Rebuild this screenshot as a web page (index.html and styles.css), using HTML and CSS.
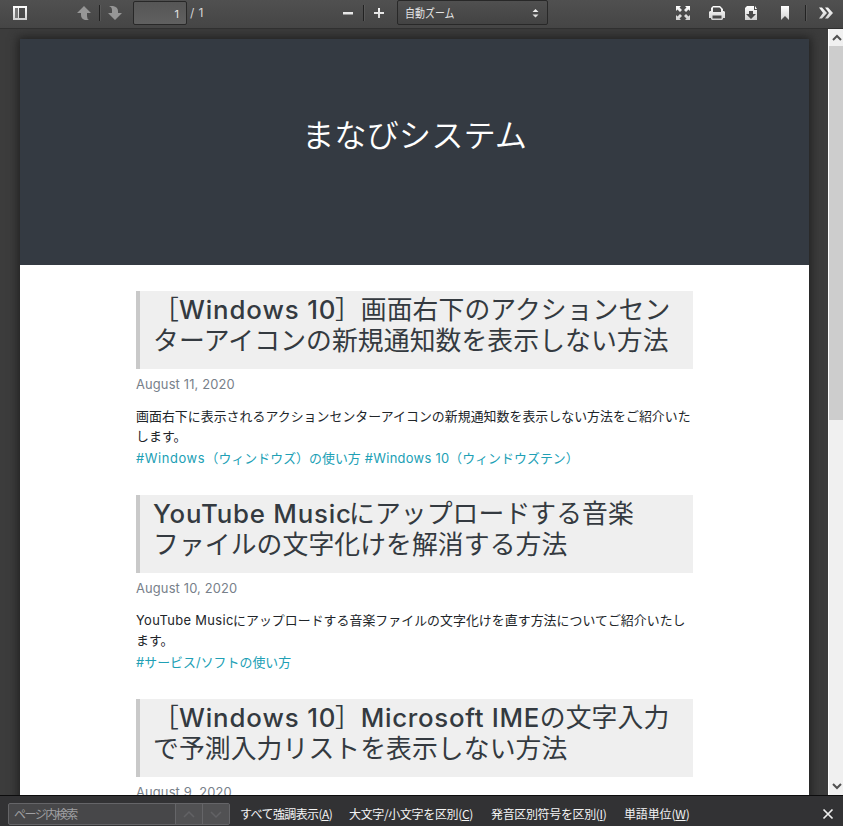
FILE: index.html
```html
<!DOCTYPE html>
<html lang="ja">
<head>
<meta charset="utf-8">
<title>まなびシステム</title>
<link rel="stylesheet" href="styles.css">
</head>
<body>
<div class="viewer">
  <header class="toolbar">
    <svg class="icons" width="843" height="29" viewBox="0 0 843 29">
      <defs>
        <linearGradient id="metal" x1="0" y1="6" x2="0" y2="21" gradientUnits="userSpaceOnUse"><stop offset="0" stop-color="#fff"/><stop offset="1" stop-color="#ccc"/></linearGradient>
      </defs>
      <g fill="url(#metal)">
        <path fill-rule="evenodd" d="M13 6h14v14H13zM15 8v10h3V8zM19 8v10h6V8z"/>
        <path fill="#777" d="M15 8h3v10h-3z"/>
        <path fill="#969696" d="M84 6l7 7h-4v3q0 3 2 4h-4q-4-1-4-5v-2h-4z"/>
        <path fill="#969696" d="M109 6h4q5 1 5 5v2h4l-7 7-7-7h4v-3q0-3-3-4z"/>
        <path d="M343 12h10v2.500h-10zM374 12h4V8h2v4h4v2h-4v4h-2v-4h-4z"/>
        <path d="M532.500 12l3-3 3 3zM532.500 14.500h6l-3 3z"/>
        <path d="M676 6h5l-1.500 1.500L682 10l-2 2-2.500-2.500L676 11zM690 6v5l-1.500-1.500L686 12l-2-2 2.500-2.500L685 6zM676 20v-5l1.500 1.500L680 14l2 2-2.500 2.500L681 20zM690 20h-5l1.500-1.500L684 16l2-2 2.500 2.500L690 15z"/>
        <path fill-rule="evenodd" d="M711 11V8l2-2h7l3 3v2h1l1 1v6h-2v1l-1 1h-10l-1-1v-1h-2v-6l1-1zM713 7.500V12h8V9l-1.500-1.500zM712.500 15.500v3h9v-3z"/>
        <path fill-rule="evenodd" d="M745 8l2-2h7v4h3v10h-12zM749 11v3h-3l5 5 5-5h-3v-3zM755 6l2 3h-2z"/>
        <path d="M781 6h8v14l-4-4-4 4z"/>
        <path d="M819 7.500h3l5 5.500-5 5.500h-3l4-5.500zM825 7.500h3l5 5.500-5 5.500h-3l4-5.500z"/>
      </g>
      <path stroke="#222" d="M99.500 5v16M363.500 5v16M805.500 5v16"/>
      <path stroke="#666" d="M100.500 5v16M364.500 5v16M806.500 5v16" opacity=".5"/>
    </svg>
    <div class="pagebox">1</div>
    <div class="pages">/ 1</div>
    <div class="zoom"><span>自動ズーム</span></div>
  </header>
  <div class="stage">
    <main class="sheet">
      <div class="hero"><h1>まなびシステム</h1></div>
      <div class="list">
        <article>
          <h2>［<span class="lat w1">Windows 10</span>］画面右下のアクションセン<br>ターアイコンの新規通知数を表示しない方法</h2>
          <div class="date">August 11, 2020</div>
          <p>画面右下に表示されるアクションセンターアイコンの新規通知数を表示しない方法をご紹介いた<br>します。</p>
          <div class="tags"><a><span class="lat t1">#Windows</span>（ウィンドウズ）の使い方</a><a class="second"><span class="lat t2">#Windows 10</span>（ウィンドウズテン）</a></div>
        </article>
        <article>
          <h2><span class="lat w2">YouTube Music</span>にアップロードする音楽<br>ファイルの文字化けを解消する方法</h2>
          <div class="date">August 10, 2020</div>
          <p><span class="lat b1">YouTube Music</span>にアップロードする音楽ファイルの文字化けを直す方法についてご紹介いたし<br>ます。</p>
          <div class="tags"><a>#サービス/ソフトの使い方</a></div>
        </article>
        <article>
          <h2>［<span class="lat w1">Windows 10</span>］<span class="lat w3">Microsoft IME</span>の文字入力<br>で予測入力リストを表示しない方法</h2>
          <div class="date">August 9, 2020</div>
        </article>
      </div>
    </main>
    <div class="scroll">
      <svg width="14" height="17"><path d="M4 11l4-4 4 4" fill="none" stroke="#505050" stroke-width="2"/></svg>
      <div class="thumb"></div>
      <svg class="down" width="14" height="17"><path d="M4 6l4 4 4-4" fill="none" stroke="#505050" stroke-width="2"/></svg>
    </div>
  </div>
  <footer class="findbar">
    <div class="find"><span class="query">ページ内検索</span><span class="step"><svg width="26" height="20"><path d="M8 13l5-5 5 5" fill="none" stroke="#626265" stroke-width="1.500"/></svg></span><span class="step"><svg width="26" height="20"><path d="M8 8l5 5 5-5" fill="none" stroke="#626265" stroke-width="1.500"/></svg></span></div>
    <div class="opt o1">すべて強調表示(<u>A</u>)</div>
    <div class="opt o2">大文字/小文字を区別(<u>C</u>)</div>
    <div class="opt o3">発音区別符号を区別(<u>I</u>)</div>
    <div class="opt o4">単語単位(<u>W</u>)</div>
    <svg class="close" width="12" height="12"><path d="M1.500 1.500l9 9M10.500 1.500l-9 9" stroke="#eee" stroke-width="1.700"/></svg>
  </footer>
</div>
</body>
</html>
```
FILE: styles.css
```css
* { box-sizing: border-box; }
body { margin: 0; font-family: Inter, "Noto Sans CJK JP", sans-serif; }
.viewer { width: 843px; height: 826px; display: flex; flex-direction: column; overflow: hidden; background: #3c3c3c; }
.toolbar { position: relative; height: 29px; flex: none; display: flex; align-items: flex-start; padding-left: 133px; background: linear-gradient(#505050, #454545); border-bottom: 1px solid #303030; color: #e4e4e4; font-size: 12px; }
.icons { position: absolute; left: 0; top: 0; z-index: 1; pointer-events: none; }
.pagebox { width: 54px; height: 24px; margin-top: 1px; padding-right: 7px; border: 1px solid #282828; border-radius: 2px; background: linear-gradient(#565656, #606060); text-align: right; line-height: 24px; font-size: 11px; }
.pages { width: 210px; padding-left: 3px; line-height: 26px; font-size: 12px; color: #d5d5d5; letter-spacing: .4px; }
.zoom { width: 151px; height: 25px; border: 1px solid #282828; border-radius: 2px; background: linear-gradient(#505050, #434343); padding-left: 7px; line-height: 24px; font-family: "Noto Sans CJK JP", sans-serif; white-space: nowrap; }
.zoom span { display: inline-block; transform: scaleX(.83); transform-origin: left; }
.stage { flex: 1; min-height: 0; display: flex; overflow: hidden; background: #3c3c3c; padding: 10px 0 0 20px; }
.sheet { width: 789px; height: 900px; flex: none; background: #fff; box-shadow: 0 0 9px 2px #202020; }
.hero { height: 226px; background: #343a42; color: #fff; text-align: center; padding-top: 70px; }
h1 { margin: 0; font: 350 32.300px/48px "Noto Sans CJK JP", sans-serif; }
.list { padding: 26px 116px 0; color: #212529; }
article { height: 204px; }
h2 { margin: 0; height: 78px; border-left: 4px solid #c9c9c9; background: #efefef; padding: 3px 0 0 13px; font-family: Inter, "Noto Sans CJK JP", sans-serif; font-size: 25.800px; line-height: 31px; font-weight: 400; letter-spacing: .1px; color: #343a40; white-space: nowrap; font-feature-settings: "calt" 0; }
.lat { display: inline-block; white-space: nowrap; }
h2 .lat { font-weight: 500; }
.w1 { width: 156px; letter-spacing: .9px; }
.w2 { width: 196px; letter-spacing: .8px; }
.w3 { width: 179px; letter-spacing: .7px; }
.date { margin-top: 6px; font-size: 12.900px; line-height: 20px; color: #77808a; white-space: pre; letter-spacing: .15px; }
p { margin: 12px 0 0; font-size: 12.900px; line-height: 20px; white-space: nowrap; letter-spacing: .05px; }
.tags { display: flex; gap: 4px; margin-top: 2px; font-size: 12.900px; line-height: 20px; color: #20a0b5; white-space: nowrap; letter-spacing: .05px; }
.t1 { width: 69.500px; letter-spacing: .6px; }
.t2 { width: 84.500px; letter-spacing: .3px; }
.b1 { width: 97px; letter-spacing: .35px; }
.scroll { width: 15px; margin: -10px 0 0 19px; border-left: 1px solid #fff; background: #f0f0f0; display: flex; flex-direction: column; flex: none; }
.scroll svg { display: block; flex: none; }
.thumb { height: 374px; background: #cdcdcd; }
.down { margin-top: auto; }
.findbar { position: relative; height: 31px; flex: none; display: flex; align-items: center; border-top: 1px solid #0c0c0d; background: #323234; color: #f4f4f4; font: 12px/20px "Noto Sans CJK JP", sans-serif; padding: 6px 9px 0 8px; }
.find { width: 222px; height: 22px; display: flex; border: 1px solid #656568; border-radius: 2px; background: #474749; color: #a0a0a3; }
.query { width: 167px; padding-left: 5px; white-space: nowrap; letter-spacing: -1.500px; }
.step { width: 27px; border-left: 1px solid #656568; background: #515153; }
.opt { white-space: nowrap; flex: none; }
.o1 { margin-left: 10px; width: 109px; letter-spacing: -.6px; }
.o2 { width: 142px; letter-spacing: -.35px; }
.o3 { width: 133px; letter-spacing: -.35px; }
.o4 { width: 80px; letter-spacing: -.15px; }
.close { margin-left: auto; }
```
